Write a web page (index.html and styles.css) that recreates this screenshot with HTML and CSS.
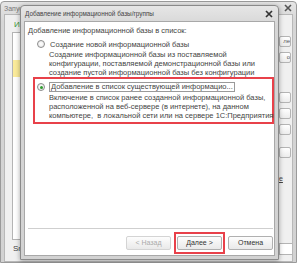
FILE: index.html
```html
<!DOCTYPE html>
<html lang="ru">
<head>
    <meta charset="UTF-8">
    <title>Добавление информационной базы/группы</title>
    <link rel="stylesheet" href="styles.css">
</head>
<body>
    <div class="desk">
        <!-- background window: launcher -->
        <div class="win bg-win">
            <div class="win-title">
                <span class="win-caption">Запуск 1С:Предприятия</span>
                <svg class="close" width="8" height="8" viewBox="0 0 8 8"><path d="M1 1L7 7M7 1L1 7" stroke="#555" stroke-width="1.6"/></svg>
            </div>
            <div class="bg-client">
                <div class="bg-left">
                    <div class="bg-label">Информационные базы</div>
                    <div class="bg-list">
                        <div class="bg-row"></div>
                        <div class="bg-row"></div>
                        <div class="bg-row"></div>
                        <div class="bg-row bg-row-sel"></div>
                    </div>
                    <div class="bg-path">Sn</div>
                </div>
                <div class="bg-side">
                    <div class="bg-btn">ле</div>
                    <div class="bg-btn">о</div>
                    <div class="bg-btn bg-btn-gap"></div>
                    <div class="bg-btn"></div>
                    <div class="bg-btn"></div>
                    <div class="bg-btn bg-btn-gap2"></div>
                    <div class="bg-link">е</div>
                    <div class="bg-field"></div>
                </div>
            </div>
        </div>

        <!-- dialog -->
        <div class="win dlg">
            <div class="win-title dlg-title">
                <span class="win-caption">Добавление информационной базы/группы</span>
                <svg class="close" width="8" height="8" viewBox="0 0 8 8"><path d="M1 1L7 7M7 1L1 7" stroke="#333" stroke-width="1.7"/></svg>
            </div>
            <div class="dlg-client">
                <div class="dlg-body">
                    <div class="heading">Добавление информационной базы в список:</div>

                    <div class="option">
                        <div class="opt-head">
                            <span class="radio"></span>
                            <span class="opt-label">Создание новой информационной базы</span>
                        </div>
                        <div class="opt-desc">Создание информационной базы из поставляемой<br>конфигурации, поставляемой демонстрационной базы или<br>создание пустой информационной базы без конфигурации</div>
                    </div>

                    <div class="option option-mark">
                        <div class="opt-head">
                            <span class="radio radio-on"></span>
                            <span class="opt-label opt-focus">Добавление в список существующей информацио...</span>
                        </div>
                        <div class="opt-desc">Включение в список ранее созданной информационной базы,<br>расположенной на веб-сервере (в интернете), на данном<br>компьютере,&nbsp; в локальной сети или на сервере 1С:Предприятия</div>
                    </div>
                </div>

                <div class="dlg-footer">
                    <div class="btn btn-off">&lt; Назад</div>
                    <div class="btn-mark"><div class="btn">Далее &gt;</div></div>
                    <div class="btn">Отмена</div>
                </div>
            </div>
        </div>
    </div>
</body>
</html>
```

FILE: styles.css
```css
* {
    box-sizing: border-box;
}
body {
    margin: 0;
    font-family: 'Liberation Sans', Arial, sans-serif;
    color: #333;
    background: #fff;
}
.desk {
    position: relative;
    width: 300px;
    height: 263px;
    overflow: hidden;
    background: #fff;
}
.win {
    position: absolute;
    display: flex;
    flex-direction: column;
    border: 1px solid #9a9a9a;
    border-radius: 4px 4px 0 0;
    background: linear-gradient(#e6e6e6, #d6d6d6 20px, #d2d2d2);
    overflow: hidden;
}
.win-title {
    flex: none;
    height: 12px;
    display: flex;
    align-items: center;
    justify-content: space-between;
    padding: 0 4px 0 3px;
    font-size: 7px;
    color: #777;
    white-space: nowrap;
    overflow: hidden;
}
.close {
    flex: none;
}

/* background window */
.bg-win {
    left: 0;
    top: 1px;
    width: 297px;
    height: 262px;
}
.bg-client {
    flex: 1;
    min-height: 0;
    overflow: hidden;
    margin: 0 3px;
    background: #f0f0f0;
    border: 1px solid #b8b8b8;
    display: flex;
    padding: 5px 0 0 7px;
}
.bg-left {
    flex: 1;
    display: flex;
    flex-direction: column;
}
.bg-label {
    font-size: 8px;
    color: #3c9a3c;
    margin-left: 2px;
    height: 10px;
    line-height: 10px;
}
.bg-list {
    height: 208px;
    margin-top: 2px;
    border: 1px solid #b4b4b4;
    background: #fff;
    padding-top: 3px;
}
.bg-row {
    height: 8px;
}
.bg-row-sel {
    height: 17px;
    background: #fbeb9a;
}
.bg-path {
    font-size: 8px;
    color: #444;
    margin: 4px 0 0 1px;
}
.bg-side {
    width: 17px;
    flex: none;
    padding: 16px 0 0 4px;
    display: flex;
    flex-direction: column;
    gap: 5px;
}
.bg-btn {
    flex: none;
    width: 12px;
    height: 11px;
    border: 1px solid #b4b4b4;
    border-radius: 2px;
    background: linear-gradient(#fff, #ececec);
    font-size: 6px;
    line-height: 9px;
    color: #555;
    text-align: right;
    overflow: hidden;
}
.bg-btn-gap {
    margin-top: 24px;
}
.bg-btn-gap2 {
    margin-top: 7px;
}
.bg-link {
    flex: none;
    margin-top: 12px;
    font-size: 7px;
    color: #444;
    text-decoration: underline;
}
.bg-field {
    flex: none;
    margin-top: 56px;
    width: 30px;
    height: 12px;
    border: 1px solid #b4b4b4;
    background: #fff;
}

/* dialog */
.dlg {
    left: 20px;
    top: 5px;
    width: 259px;
    height: 255px;
    border-color: #8a8a8a;
    box-shadow: 0 1px 5px rgba(0, 0, 0, 0.35);
    overflow: visible;
}
.dlg-title {
    height: 15px;
    padding: 0 5px 0 4px;
    font-size: 6.4px;
    color: #444;
}
.dlg-client {
    flex: 1;
    margin: 0 3px 3px;
    background: #fff;
    border: 1px solid #a8a8a8;
    display: flex;
    flex-direction: column;
    font-size: 7.5px;
    line-height: 9px;
    color: #444;
}
.dlg-body {
    flex: 1;
    padding: 4px 0 0 3px;
}
.heading {
    margin-bottom: 4px;
}
.option {
    margin-left: 5px;
    width: 241px;
    padding: 0 0 0 4px;
}
.option-mark {
    border: 2px solid #e8414a;
    padding: 3px 0 2px 2px;
}
.opt-head {
    display: flex;
    align-items: center;
    height: 10px;
    margin-bottom: 1px;
}
.radio {
    width: 8px;
    height: 8px;
    border-radius: 50%;
    border: 1px solid #8c8c8c;
    background: radial-gradient(#fff, #e4e4e4);
    margin-right: 4px;
    flex: none;
    display: flex;
    align-items: center;
    justify-content: center;
}
.radio-on::after {
    content: "";
    width: 3px;
    height: 3px;
    border-radius: 50%;
    background: #2f9a2f;
}
.opt-label {
    white-space: nowrap;
    padding: 0 1px;
    line-height: 9px;
}
.opt-focus {
    border: 1px solid #9a9a9a;
    width: 186px;
    overflow: hidden;
    line-height: 8px;
}
.opt-desc {
    margin-left: 12px;
    white-space: nowrap;
}
.dlg-footer {
    margin: 0 1px 0 3px;
    border-top: 1px solid #cfcfcf;
    height: 27px;
    display: flex;
    justify-content: flex-end;
    align-items: center;
    gap: 2px;
    padding-top: 1px;
}
.btn {
    width: 45px;
    height: 14px;
    border: 1px solid #b0b0b0;
    border-radius: 2px;
    background: linear-gradient(#fdfdfd, #e9e9e9);
    font-size: 7px;
    line-height: 12px;
    text-align: center;
    color: #333;
}
.btn-off {
    color: #aaa;
    border-color: #d4d4d4;
    margin-right: 1px;
}
.btn-mark {
    border: 2px solid #e8414a;
    padding: 2px 1px;
    margin-right: 1px;
}
```
